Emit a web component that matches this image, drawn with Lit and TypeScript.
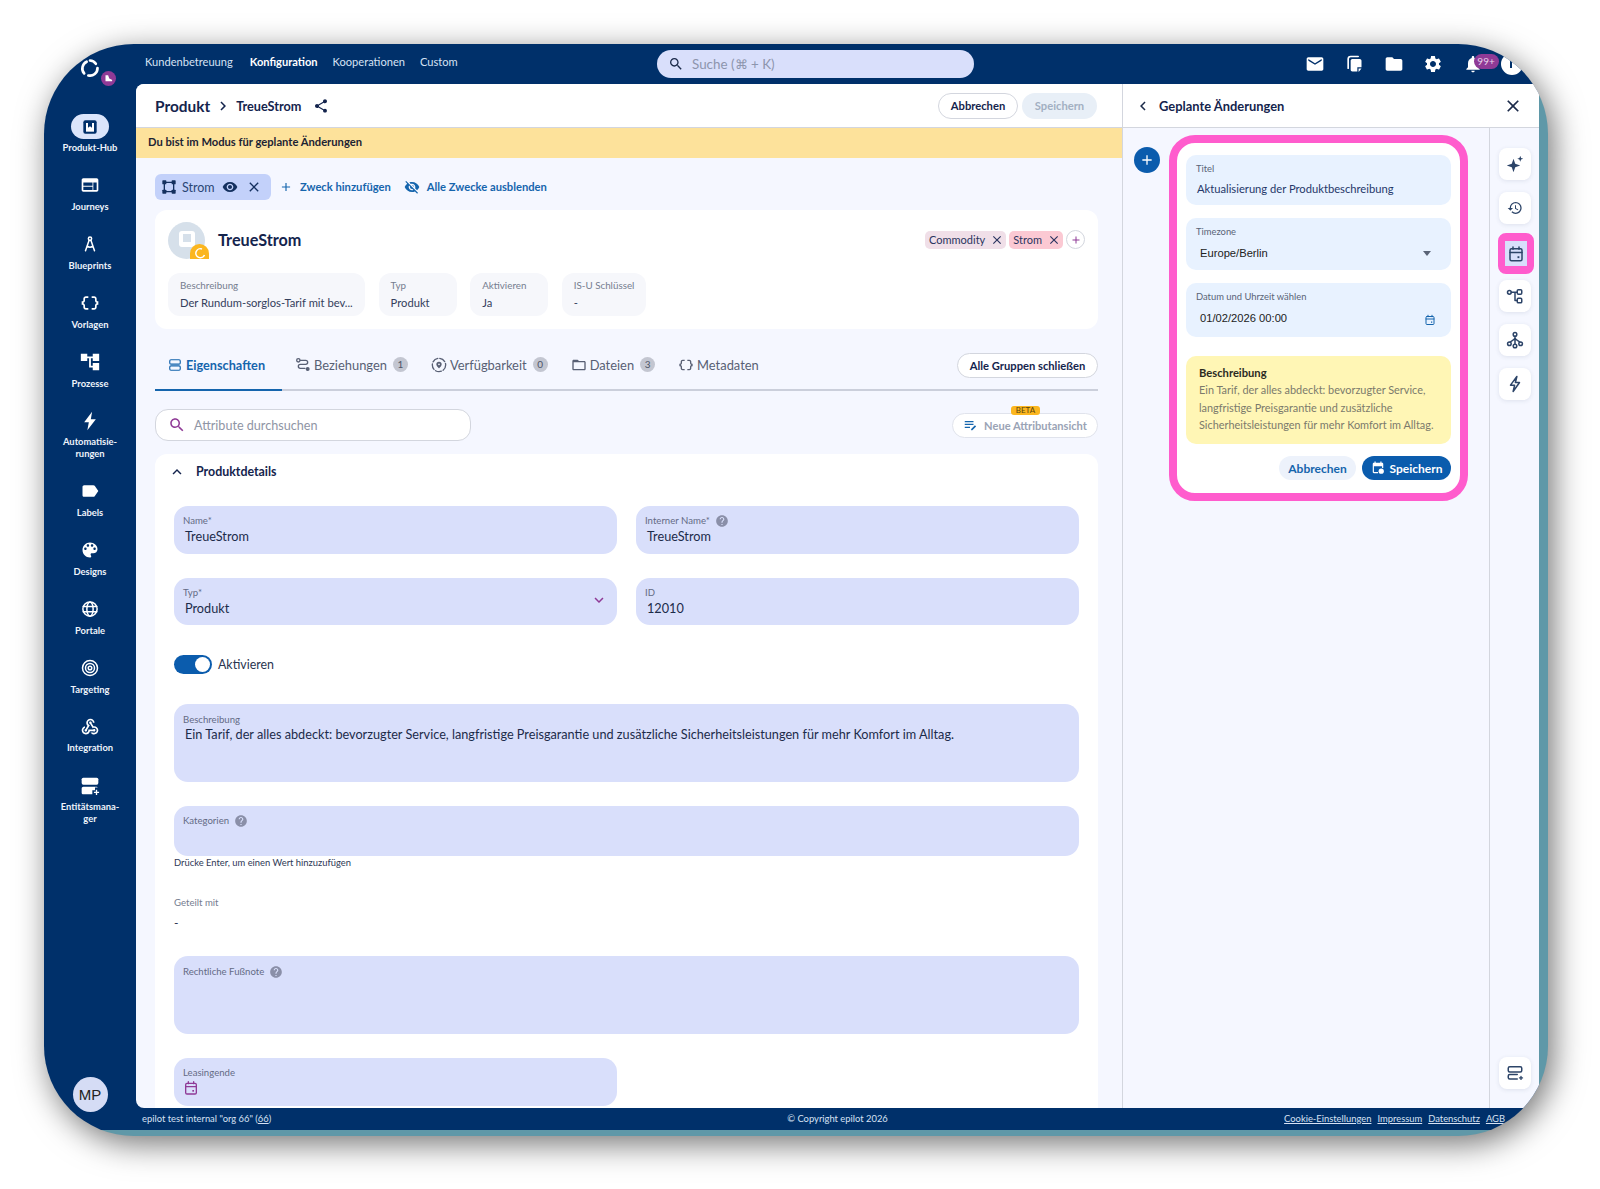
import { LitElement, html, css, svg } from 'lit';
import { customElement } from 'lit/decorators.js';

// material-ish paths, 24x24 viewBox
const P = {
  mail: 'M20 4H4c-1.1 0-1.99.9-1.99 2L2 18c0 1.1.9 2 2 2h16c1.1 0 2-.9 2-2V6c0-1.1-.9-2-2-2zm0 4l-8 5-8-5V6l8 5 8-5v2z',
  folder: 'M10 4H4c-1.1 0-1.99.9-1.99 2L2 18c0 1.1.9 2 2 2h16c1.1 0 2-.9 2-2V8c0-1.1-.9-2-2-2h-8l-2-2z',
  folderOutline: 'M20 6h-8l-2-2H4c-1.1 0-1.99.9-1.99 2L2 18c0 1.1.9 2 2 2h16c1.1 0 2-.9 2-2V8c0-1.1-.9-2-2-2zm0 12H4V8h16v10z',
  gear: 'M19.14 12.94c.04-.3.06-.61.06-.94 0-.32-.02-.64-.07-.94l2.03-1.58a.49.49 0 0 0 .12-.61l-1.92-3.32a.488.488 0 0 0-.59-.22l-2.39.96c-.5-.38-1.03-.7-1.62-.94l-.36-2.54a.484.484 0 0 0-.48-.41h-3.84c-.24 0-.43.17-.47.41l-.36 2.54c-.59.24-1.13.57-1.62.94l-2.39-.96c-.22-.08-.47 0-.59.22L2.74 8.87c-.12.21-.08.47.12.61l2.03 1.58c-.05.3-.09.63-.09.94s.02.64.07.94l-2.03 1.58a.49.49 0 0 0-.12.61l1.92 3.32c.12.22.37.29.59.22l2.39-.96c.5.38 1.03.7 1.62.94l.36 2.54c.05.24.24.41.48.41h3.84c.24 0 .44-.17.47-.41l.36-2.54c.59-.24 1.13-.56 1.62-.94l2.39.96c.22.08.47 0 .59-.22l1.92-3.32c.12-.22.07-.47-.12-.61l-2.01-1.58zM12 15.6c-1.98 0-3.6-1.62-3.6-3.6s1.62-3.6 3.6-3.6 3.6 1.62 3.6 3.6-1.62 3.6-3.6 3.6z',
  bell: 'M12 22c1.1 0 2-.9 2-2h-4c0 1.1.89 2 2 2zm6-6v-5c0-3.07-1.64-5.64-4.5-6.32V4c0-.83-.67-1.5-1.5-1.5s-1.5.67-1.5 1.5v.68C7.63 5.36 6 7.92 6 11v5l-2 2v1h16v-1l-2-2z',
  search: 'M15.5 14h-.79l-.28-.27C15.41 12.59 16 11.11 16 9.5 16 5.91 13.09 3 9.5 3S3 5.91 3 9.5 5.91 16 9.5 16c1.61 0 3.09-.59 4.23-1.57l.27.28v.79l5 4.99L20.49 19l-4.99-5zm-6 0C7.01 14 5 11.99 5 9.5S7.01 5 9.5 5 14 7.01 14 9.5 11.99 14 9.5 14z',
  share: 'M18 16.08c-.76 0-1.44.3-1.96.77L8.91 12.7c.05-.23.09-.46.09-.7s-.04-.47-.09-.7l7.05-4.11c.54.5 1.25.81 2.04.81 1.66 0 3-1.34 3-3s-1.34-3-3-3-3 1.34-3 3c0 .24.04.47.09.7L8.04 9.81C7.5 9.31 6.79 9 6 9c-1.66 0-3 1.34-3 3s1.34 3 3 3c.79 0 1.5-.31 2.04-.81l7.12 4.16c-.05.21-.08.43-.08.65 0 1.61 1.31 2.92 2.92 2.92s2.92-1.31 2.92-2.92-1.31-2.92-2.92-2.92z',
  close: 'M19 6.41 17.59 5 12 10.59 6.41 5 5 6.41 10.59 12 5 17.59 6.41 19 12 13.41 17.59 19 19 17.59 13.41 12z',
  eye: 'M12 4.5C7 4.5 2.73 7.61 1 12c1.73 4.39 6 7.5 11 7.5s9.27-3.11 11-7.5c-1.73-4.39-6-7.5-11-7.5zM12 17c-2.76 0-5-2.24-5-5s2.24-5 5-5 5 2.24 5 5-2.24 5-5 5zm0-8c-1.66 0-3 1.34-3 3s1.34 3 3 3 3-1.34 3-3-1.34-3-3-3z',
  eyeOff: 'M12 7c2.76 0 5 2.24 5 5 0 .65-.13 1.26-.36 1.83l2.92 2.92c1.51-1.26 2.7-2.89 3.43-4.75-1.73-4.39-6-7.5-11-7.5-1.4 0-2.74.25-3.98.7l2.16 2.16C10.74 7.13 11.35 7 12 7zM2 4.27l2.28 2.28.46.46C3.08 8.3 1.78 10.02 1 12c1.73 4.39 6 7.5 11 7.5 1.55 0 3.03-.3 4.38-.84l.42.42L19.73 22 21 20.73 3.27 3 2 4.27zM7.53 9.8l1.55 1.55c-.05.21-.08.43-.08.65 0 1.66 1.34 3 3 3 .22 0 .44-.03.65-.08l1.55 1.55c-.67.33-1.41.53-2.2.53-2.76 0-5-2.24-5-5 0-.79.2-1.53.53-2.2zm4.31-.78l3.15 3.15.02-.16c0-1.66-1.34-3-3-3l-.17.01z',
  palette: 'M12 3c-4.97 0-9 4.03-9 9s4.03 9 9 9c.83 0 1.5-.67 1.5-1.5 0-.39-.15-.74-.39-1.01-.23-.26-.38-.61-.38-.99 0-.83.67-1.5 1.5-1.5H16c2.76 0 5-2.24 5-5 0-4.42-4.03-8-9-8zm-5.5 9c-.83 0-1.5-.67-1.5-1.5S5.67 9 6.5 9 8 9.67 8 10.5 7.33 12 6.5 12zm3-4C8.67 8 8 7.33 8 6.5S8.67 5 9.5 5s1.5.67 1.5 1.5S10.33 8 9.5 8zm5 0c-.83 0-1.5-.67-1.5-1.5S13.67 5 14.5 5s1.5.67 1.5 1.5S15.33 8 14.5 8zm3 4c-.83 0-1.5-.67-1.5-1.5S16.67 9 17.5 9s1.5.67 1.5 1.5-.67 1.5-1.5 1.5z',
  label: 'M17.63 5.84C17.27 5.33 16.67 5 16 5L5 5.01C3.9 5.01 3 5.9 3 7v10c0 1.1.9 1.99 2 1.99L16 19c.67 0 1.27-.33 1.63-.84L22 12l-4.37-6.16z',
  web: 'M20 4H4c-1.1 0-1.99.9-1.99 2L2 18c0 1.1.9 2 2 2h16c1.1 0 2-.9 2-2V6c0-1.1-.9-2-2-2zm-5 14H4v-4h11v4zm0-5H4V9h11v4zm5 5h-4V9h4v9z',
  braces: 'M4 7v2c0 .55-.45 1-1 1H2v4h1c.55 0 1 .45 1 1v2c0 1.65 1.35 3 3 3h3v-2H7c-.55 0-1-.45-1-1v-2c0-1.3-.84-2.42-2-2.83v-.34C5.16 11.42 6 10.3 6 9V7c0-.55.45-1 1-1h3V4H7C5.35 4 4 5.35 4 7zM21 10c-.55 0-1-.45-1-1V7c0-1.65-1.35-3-3-3h-3v2h3c.55 0 1 .45 1 1v2c0 1.3.84 2.42 2 2.83v.34c-1.16.41-2 1.52-2 2.83v2c0 .55-.45 1-1 1h-3v2h3c1.65 0 3-1.35 3-3v-2c0-.55.45-1 1-1h1v-4h-1z',
  tree: 'M22 11V3h-7v3H9V3H2v8h7V8h2v10h4v3h7v-8h-7v3h-2V8h2v3z',
  bolt: 'M14.5 1 5 13.6h5.6L8.8 23 19 9.8h-6z',
  webhook: 'M10 15h5.88c.27-.31.67-.5 1.12-.5.83 0 1.5.67 1.5 1.5s-.67 1.5-1.5 1.5c-.44 0-.84-.19-1.12-.5H11.9c-.46 2.28-2.48 4-4.9 4-2.76 0-5-2.24-5-5 0-2.42 1.72-4.44 4-4.9v2.07c-1.16.41-2 1.53-2 2.83 0 1.65 1.35 3 3 3s3-1.35 3-3v-1zm2.5-11c1.65 0 3 1.35 3 3h2c0-2.76-2.24-5-5-5s-5 2.24-5 5c0 1.43.6 2.71 1.55 3.62l-2.35 3.9C6.02 14.66 5.5 15.27 5.5 16c0 .83.67 1.5 1.5 1.5s1.5-.67 1.5-1.5c0-.16-.02-.31-.07-.45l3.38-5.63C10.49 9.61 9.5 8.42 9.5 7c0-1.65 1.35-3 3-3zm4.5 9c-.64 0-1.23.2-1.72.54l-3.05-5.07C11.53 8.35 11 7.74 11 7c0-.83.67-1.5 1.5-1.5S14 6.17 14 7c0 .15-.02.29-.06.43l2.19 3.65c.28-.05.57-.08.87-.08 2.76 0 5 2.24 5 5s-2.24 5-5 5c-1.85 0-3.47-1.01-4.33-2.5h2.67c.48.32 1.05.5 1.66.5 1.65 0 3-1.35 3-3s-1.35-3-3-3z',
  history: 'M13 3a9 9 0 0 0-9 9H1l3.89 3.89.07.14L9 12H6c0-3.87 3.13-7 7-7s7 3.13 7 7-3.13 7-7 7c-1.93 0-3.68-.79-4.94-2.06l-1.42 1.42A8.954 8.954 0 0 0 13 21a9 9 0 0 0 0-18zm-1 5v5l4.28 2.54.72-1.21-3.5-2.08V8H12z',
  plus: 'M19 13h-6v6h-2v-6H5v-2h6V5h2v6h6v2z',
  sparkle: 'M10 5l2.3 6.7L19 14l-6.7 2.3L10 23l-2.3-6.7L1 14l6.7-2.3zM19 1l1.1 2.9L23 5l-2.9 1.1L19 9l-1.1-2.9L15 5l2.9-1.1z',
  chevDown: 'M7.41 8.59 12 13.17l4.59-4.58L18 10l-6 6-6-6z',
  chevUp: 'M7.41 15.41 12 10.83l4.59 4.58L18 14l-6-6-6 6z',
  chevLeft: 'M15.41 7.41 14 6l-6 6 6 6 1.41-1.41L10.83 12z',
  chevRight: 'M8.59 16.59 13.17 12 8.59 7.41 10 6l6 6-6 6z',
  help: 'M12 2C6.48 2 2 6.48 2 12s4.48 10 10 10 10-4.48 10-10S17.52 2 12 2zm1 17h-2v-2h2v2zm2.07-7.75-.9.92C13.45 12.9 13 13.5 13 15h-2v-.5c0-1.1.45-2.1 1.17-2.83l1.24-1.26c.37-.36.59-.86.59-1.41 0-1.1-.9-2-2-2s-2 .9-2 2H8c0-2.21 1.79-4 4-4s4 1.79 4 4c0 .88-.36 1.68-.93 2.25z',
  editList: 'M3 5h15v2.2H3zM3 10h15v2.2H3zM3 15h9v2.2H3zM20.5 12.5l2 2-6.5 6.5H14v-2z',
};

const icon = (d: string, cls = '') => html`<svg class="ic ${cls}" viewBox="0 0 24 24" fill="currentColor"><path d=${d}></path></svg>`;
const drawn = (content: unknown, cls = '') => html`<svg class="ic ${cls}" viewBox="0 0 24 24" fill="none" stroke="currentColor" stroke-width="2" stroke-linecap="round" stroke-linejoin="round">${content}</svg>`;

const calendar = (cls: string) => drawn(svg`<rect x="4" y="5" width="16" height="16" rx="2"></rect><path d="M4 10h16M8 2.5v3M16 2.5v3"></path><rect x="14" y="15" width="2.5" height="2.5" fill="currentColor" stroke="none"></rect>`, cls);
const hubIcon = html`<svg class="ic i16" viewBox="0 0 24 24"><rect x="2" y="2" width="20" height="20" rx="3" fill="#00306a"></rect><rect x="6" y="6" width="12" height="13" fill="#fff"></rect><path d="M9 6h6v7l-3-2-3 2z" fill="#00306a"></path></svg>`;
const compass = drawn(svg`<circle cx="12" cy="5" r="2.2"></circle><path d="M10.8 7 6 21M13.2 7 18 21M8 15c2.5 1.6 5.5 1.6 8 0"></path>`, 'i18');
const globe = drawn(svg`<circle cx="12" cy="12" r="9.5"></circle><ellipse cx="12" cy="12" rx="4.2" ry="9.5"></ellipse><path d="M3 8.5h18M3 15.5h18"></path>`, 'i18');
const target = drawn(svg`<circle cx="12" cy="12" r="10"></circle><circle cx="12" cy="12" r="6"></circle><circle cx="12" cy="12" r="2.4"></circle>`, 'i18');
const entity = html`<svg class="ic i20" viewBox="0 0 24 24" fill="currentColor"><rect x="2" y="2" width="20" height="8.5" rx="2"></rect><path d="M4 13h16c.6 0 1 .3 1.3.8H18v3.2h-3.2V22H4c-1.1 0-2-.9-2-2v-5c0-1.1.9-2 2-2z"></path><path d="M19 16.5h1.6v2.3h2.3v1.6h-2.3v2.3H19v-2.3h-2.3v-1.6H19z"></path></svg>`;
const copies = html`<svg class="ic i20" viewBox="0 0 24 24"><path d="M5 17V6c0-1.6 1.3-3 3-3h9" fill="none" stroke="currentColor" stroke-width="2" stroke-linecap="round"></path><path d="M10 6h9c1.1 0 2 .9 2 2v8h-5v5h-6c-1.1 0-2-.9-2-2V8c0-1.1.9-2 2-2z" fill="currentColor"></path><path d="M17.5 17.5H21L17.5 21.5z" fill="currentColor"></path></svg>`;
const frameIcon = html`<svg class="ic i16" viewBox="0 0 24 24" fill="currentColor"><path d="M5 5h14v14H5z" fill="none" stroke="currentColor" stroke-width="2"></path><rect x="2" y="2" width="6" height="6" rx="1"></rect><rect x="16" y="2" width="6" height="6" rx="1"></rect><rect x="2" y="16" width="6" height="6" rx="1"></rect><rect x="16" y="16" width="6" height="6" rx="1"></rect></svg>`;
const stackIcon = drawn(svg`<rect x="3" y="3" width="18" height="7.5" rx="2"></rect><rect x="3" y="13.5" width="18" height="7.5" rx="2"></rect>`, 'i14');
const routeIcon = drawn(svg`<circle cx="5" cy="5" r="2.5"></circle><path d="M8 5h8c2 0 3 1.5 3 3s-1 3-3 3H8c-2 0-3 1.5-3 3s1 3 3 3h7"></path><circle cx="19" cy="18" r="2" fill="currentColor"></circle>`, 'i16');
const availIcon = drawn(svg`<circle cx="12" cy="12" r="10" stroke-dasharray="9 3"></circle><path d="M12 7a4 4 0 0 1 4 4c0 3-4 6-4 6s-4-3-4-6a4 4 0 0 1 4-4z" fill="currentColor" stroke="none"></path><circle cx="12" cy="11" r="1.3" fill="#f5f7ff" stroke="none"></circle>`, 'i16');
const flowIcon = drawn(svg`<circle cx="4.5" cy="7" r="2.5"></circle><rect x="15" y="3.5" width="6" height="6" rx="1.5"></rect><rect x="15" y="15" width="6" height="6" rx="1.5"></rect><path d="M7 7h8M12 7v11h3"></path>`, 'i18');
const hubTree = drawn(svg`<circle cx="12" cy="4.5" r="2.4"></circle><circle cx="4.5" cy="17" r="2.4"></circle><circle cx="12" cy="20" r="2.4"></circle><circle cx="19.5" cy="17" r="2.4"></circle><path d="M12 7v10.5M12 9c0 3-5 4-6.3 6M12 9c0 3 5 4 6.3 6"></path>`, 'i18');
const boltOutline = drawn(svg`<path d="M14.5 2 6 13.5h5.5L9.5 22 18 10h-5.5z"></path>`, 'i18');
const addStack = drawn(svg`<rect x="3" y="3.5" width="18" height="7" rx="2"></rect><path d="M15 14H5c-1.2 0-2 .9-2 2v2c0 1.1.8 2 2 2h10"></path><path d="M20 16.5v4M18 18.5h4" stroke-width="1.8"></path>`, 'i18');
const saveCal = html`<svg class="ic i14" viewBox="0 0 24 24"><path d="M16 1v2H8V1H6v2H5c-1.1 0-2 .9-2 2v14c0 1.1.9 2 2 2h7v-2H5V9h14v3h2V5c0-1.1-.9-2-2-2h-1V1z" fill="currentColor"></path><circle cx="17.5" cy="17.5" r="4.5" fill="currentColor"></circle></svg>`;

const NAV = [
  { label: html`Journeys`, icon: icon(P.web, 'i20') },
  { label: html`Blueprints`, icon: compass },
  { label: html`Vorlagen`, icon: icon(P.braces, 'i20') },
  { label: html`Prozesse`, icon: icon(P.tree, 'i22') },
  { label: html`Automatisie-<br />rungen`, icon: icon(P.bolt, 'i20') },
  { label: html`Labels`, icon: icon(P.label, 'i20') },
  { label: html`Designs`, icon: icon(P.palette, 'i20') },
  { label: html`Portale`, icon: globe },
  { label: html`Targeting`, icon: target },
  { label: html`Integration`, icon: icon(P.webhook, 'i20') },
  { label: html`Entitätsmana-<br />ger`, icon: entity },
];

const TABS = [
  { name: 'Beziehungen', icon: routeIcon, count: '1' },
  { name: 'Verfügbarkeit', icon: availIcon, count: '0' },
  { name: 'Dateien', icon: icon(P.folderOutline, 'i16'), count: '3' },
  { name: 'Metadaten', icon: icon(P.braces, 'i16') },
];

const INFO = [
  { label: 'Beschreibung', value: 'Der Rundum-sorglos-Tarif mit bev...', cls: 'wide' },
  { label: 'Typ', value: 'Produkt', cls: '' },
  { label: 'Aktivieren', value: 'Ja', cls: '' },
  { label: 'IS-U Schlüssel', value: '-', cls: 'key' },
];

@customElement('app-root')
export class AppRoot extends LitElement {
  static styles = css`
    :host {
      display: block;
      box-sizing: border-box;
      width: 1600px;
      height: 1189px;
      padding: 44px 0 0 44px;
      background: #fff;
      overflow: hidden;
      font-family: Lato, 'Liberation Sans', sans-serif;
      color: #1c2b4a;
    }
    * { box-sizing: border-box; }
    .ic { display: block; flex: none; }
    .i12 { width: 12px; height: 12px; }
    .i14 { width: 14px; height: 14px; }
    .i16 { width: 16px; height: 16px; }
    .i18 { width: 18px; height: 18px; }
    .i20 { width: 20px; height: 20px; }
    .i22 { width: 22px; height: 22px; }

    .window {
      width: 1504px;
      height: 1092px;
      border-radius: 90px;
      overflow: hidden;
      display: grid;
      grid-template-columns: 92px 1fr;
      grid-template-rows: 40px 1fr 22px 6px;
      background:
        linear-gradient(#5f98a8, #5f98a8) bottom / 100% 6px no-repeat,
        linear-gradient(#5f98a8, #5f98a8) right bottom / 9px calc(100% - 50px) no-repeat,
        #00306a;
      box-shadow: 5px 8px 32px rgba(0, 0, 0, 0.55);
    }

    /* top bar */
    .topbar {
      grid-column: 1 / -1;
      display: flex;
      align-items: center;
      color: #fff;
    }
    .logo { position: relative; width: 92px; flex: none; align-self: stretch; }
    .logo .ring { position: absolute; left: 36px; top: 14px; width: 20px; height: 20px; }
    .logo .dot {
      position: absolute;
      left: 57px;
      top: 27px;
      width: 15px;
      height: 15px;
      border-radius: 50%;
      background: #8f3a96;
      display: flex;
      align-items: center;
      justify-content: center;
    }
    .topnav { display: flex; width: 521px; padding-left: 9px; font-size: 11.1px; color: #d7e2f4; margin-top: -6px; }
    .topnav span { margin-right: 17px; }
    .topnav span:nth-child(3) { margin-right: 15px; }
    .topnav .on { color: #fff; font-weight: 700; margin-right: 15px; }
    .search {
      width: 317px;
      height: 28px;
      margin-top: -1px;
      border-radius: 14px;
      background: #d9dffb;
      color: #1c2b4a;
      display: flex;
      align-items: center;
      padding-left: 11px;
      gap: 8px;
      font-size: 13.4px;
    }
    .search span { color: #8d95ad; }
    .tops { display: flex; align-items: center; gap: 19.4px; margin-left: 331px; position: relative; }
    .bell { position: relative; }
    .bell b {
      position: absolute;
      left: 11px;
      top: 0;
      width: 25px;
      height: 15px;
      border-radius: 8px;
      background: #8f3a96;
      color: #e8d4ea;
      font-size: 10px;
      font-weight: 400;
      text-align: center;
      line-height: 15px;
    }
    .me { position: relative; width: 22px; height: 22px; margin-left: -1px; border-radius: 50%; background: #fff; flex: none; }
    .me::after { content: ''; position: absolute; left: 9px; top: 6px; width: 2px; height: 9px; background: #00306a; }

    /* sidebar */
    .side {
      grid-row: 2 / 4;
      display: flex;
      flex-direction: column;
      align-items: center;
      padding: 30px 0 18px;
      color: #fff;
    }
    .nav { display: flex; flex-direction: column; align-items: center; margin-bottom: 19.4px; font-size: 9.4px; font-weight: 700; line-height: 11.5px; text-align: center; color: #eef3fb; }
    .nav .slot { width: 38px; height: 25px; margin-bottom: 3px; border-radius: 13px; display: flex; align-items: center; justify-content: center; color: #fff; }
    .nav.on .slot { background: #dbe5fb; }
    .avatar {
      margin-top: auto;
      width: 35px;
      height: 35px;
      border-radius: 50%;
      background: #d5dcf5;
      color: #222;
      font: 15px 'Liberation Sans', sans-serif;
      display: flex;
      align-items: center;
      justify-content: center;
    }

    /* main area */
    .main {
      margin-right: 9px;
      display: flex;
      min-height: 0;
      background: #f5f7ff;
      border-radius: 8px 0 0 8px;
      overflow: hidden;
    }
    .left { width: 986px; flex: none; display: flex; flex-direction: column; min-height: 0; }
    .head {
      height: 44px;
      flex: none;
      background: #fff;
      border-bottom: 1px solid #d3d6de;
      display: flex;
      align-items: center;
    }
    .left .head { padding: 0 25px 0 19px; }
    .crumb-main { font-size: 15.4px; font-weight: 700; color: #14244d; }
    .crumb-sep { margin: 0 4px 0 4px; color: #14244d; }
    .crumb { font-size: 12.7px; font-weight: 700; color: #14244d; }
    .head .share { margin-left: 12px; color: #14244d; }
    .spacer { flex: 1; }
    .btn {
      height: 26px;
      border-radius: 13px;
      font-size: 11.2px;
      font-weight: 700;
      display: flex;
      align-items: center;
      justify-content: center;
      gap: 5px;
    }
    .btn.outline { background: #fff; border: 1px solid #d3d6de; color: #14244d; }
    .btn.cancel { width: 80px; }
    .btn.mute { width: 75px; margin-left: 4px; background: #e8eff7; color: #a2afc2; }
    .banner {
      height: 30px;
      flex: none;
      background: #fde29b;
      padding: 0 0 3px 12px;
      display: flex;
      align-items: center;
      font-size: 11.2px;
      font-weight: 700;
      color: #1c2333;
    }
    .body { flex: 1; min-height: 0; padding: 16px 24px 0 19px; display: flex; flex-direction: column; }

    .purpose { height: 26px; flex: none; display: flex; align-items: center; font-size: 11.2px; font-weight: 700; color: #1565ad; }
    .purpose .lnk { margin-top: -2px; }
    .chip {
      width: 116px;
      height: 26px;
      border-radius: 6px;
      background: #c3d1fa;
      color: #14305f;
      display: flex;
      align-items: center;
      padding-left: 6px;
      font-size: 12.5px;
      font-weight: 400;
    }
    .chip .nm { margin: 0 7px 0 5px; color: #2a4675; }
    .chip .x { margin-left: 8px; }
    .purpose .add { margin: 0 7px 0 8px; }
    .purpose .off { margin: 0 7px 0 13px; }

    .card { height: 119px; flex: none; margin-top: 10px; background: #fff; border-radius: 12px; padding: 12px 13px; position: relative; }
    .card-top { display: flex; align-items: flex-start; }
    .logo-round { width: 37px; height: 37px; border-radius: 50%; background: #d6e0ea; position: relative; display: flex; align-items: center; justify-content: center; }
    .logo-round i { display: block; width: 16px; height: 16px; margin-top: -4px; border-radius: 3px; background: #fff; position: relative; }
    .logo-round i::after { content: ''; position: absolute; left: 4px; top: 3px; width: 8px; height: 8px; background: #d6e0ea; }
    .logo-round u {
      position: absolute;
      left: 22px;
      top: 22px;
      width: 19px;
      height: 15px;
      border-radius: 10px 10px 0 0;
      background: #fbb61f;
      display: flex;
      justify-content: center;
      padding-top: 3px;
    }
    .card h1 { margin: 8px 0 0 13px; font-size: 16.2px; font-weight: 700; color: #14244d; }
    .tags { margin-left: auto; margin-top: 8px; display: flex; align-items: center; font-size: 11px; color: #2b3560; }
    .tag { height: 18px; border-radius: 5px; display: flex; align-items: center; padding: 0 2px 0 4px; margin-right: 3px; gap: 5px; }
    .tag.c { background: #f0dfe8; }
    .tag.s { background: #fbc9d3; }
    .tag-add { width: 19px; height: 19px; border-radius: 50%; border: 1px solid #d3d6de; color: #8f3a96; display: flex; align-items: center; justify-content: center; }
    .infos { display: flex; gap: 13.6px; margin-top: 14px; }
    .info { width: 78px; height: 43px; padding: 5px 12px 0; border-radius: 12px; background: #f6f7fb; flex: none; }
    .info.wide { width: 197px; }
    .info.key { width: 84px; }
    .info small { display: block; font-size: 9.8px; line-height: 14px; color: #757d8f; white-space: nowrap; }
    .info div { font-size: 11.2px; line-height: 16px; margin-top: 3px; color: #34405c; white-space: nowrap; }

    .tabs { height: 62px; flex: none; display: flex; align-items: flex-end; border-bottom: 2px solid #cbcfdb; font-size: 12.9px; color: #585f74; }
    .tab { height: 36px; padding: 0 10px 13px 13px; display: flex; align-items: center; gap: 3px; }
    .tab.on { width: 127px; margin-bottom: -2px; height: 38px; gap: 4px; border-bottom: 2px solid #1565ad; color: #1565ad; font-weight: 700; font-size: 12.7px; }
    .tab em { width: 15px; height: 15px; margin-left: 3px; border-radius: 50%; background: #c3c6d1; font-style: normal; font-size: 10px; text-align: center; line-height: 15px; color: #4e5567; }
    .tabs .btn { margin: 0 0 11px auto; width: 141px; height: 25px; }

    .tools { height: 32px; flex: none; margin-top: 18px; display: flex; align-items: center; justify-content: space-between; }
    .find {
      width: 316px;
      height: 32px;
      border-radius: 13px;
      border: 1px solid #d3d6de;
      background: #fff;
      display: flex;
      align-items: center;
      padding-left: 12px;
      gap: 8px;
      font-size: 12.6px;
      color: #8f95a5;
    }
    .find svg { color: #8f3a96; }
    .view {
      position: relative;
      width: 146px;
      height: 25px;
      border-radius: 13px;
      border: 1px solid #e0e3ec;
      background: #fff;
      display: flex;
      align-items: center;
      justify-content: center;
      gap: 7px;
      font-size: 11.1px;
      font-weight: 700;
      color: #9aa3b5;
    }
    .view svg { color: #1565ad; }
    .view b {
      position: absolute;
      left: 58px;
      top: -8px;
      width: 29px;
      height: 9px;
      border-radius: 3px;
      background: #fbb61f;
      color: #5a430b;
      font-size: 8px;
      font-weight: 400;
      line-height: 9px;
      text-align: center;
    }

    .section { flex: 1; min-height: 0; margin-top: 13px; padding: 0 19px; background: #fff; border-radius: 12px 12px 0 0; overflow: hidden; }
    .section-head { height: 52px; padding-top: 9px; display: flex; align-items: flex-start; gap: 10px; font-size: 12.4px; line-height: 18px; font-weight: 700; color: #14244d; margin-left: -6px; }
    .grid { display: grid; grid-template-columns: 1fr 1fr; gap: 24px 19px; }
    .full { grid-column: 1 / -1; }
    .field { position: relative; height: 48px; padding: 8px 9px 0; border-radius: 14px; background: #d9dffb; }
    .field.h47 { height: 47px; }
    .field.h50 { height: 50px; }
    .field.tall { height: 78px; padding-top: 9px; }
    .field.tall p { margin-top: 0; }
    .field label { display: flex; align-items: center; gap: 5px; font-size: 9.6px; line-height: 14px; color: #646b85; }
    .field label svg { color: #8a8fa8; }
    .field p { margin: 1px 0 0 2px; font-size: 12.7px; line-height: 15px; color: #1c2b4a; }
    .field .pick { position: absolute; right: 9px; top: 13px; color: #8f3a96; }
    .field .cal { color: #8f3a96; }
    .toggle-row { margin: 6px 0; display: flex; align-items: center; gap: 6px; font-size: 12.4px; color: #2a3550; }
    .toggle { width: 38px; height: 19px; border-radius: 10px; background: #0b5cad; display: flex; justify-content: flex-end; padding: 2px; }
    .toggle i { display: block; width: 15px; height: 15px; border-radius: 50%; background: #fff; }
    .hint { font-size: 9.4px; line-height: 14px; color: #2e3855; }
    .shared { padding: 2px 0 1px; font-size: 9.6px; line-height: 14px; color: #757d8f; }
    .shared div { margin-top: 4px; line-height: 17px; font-size: 12px; color: #1c2b4a; }

    /* right side panel */
    .right { flex: 1; display: flex; flex-direction: column; min-width: 0; border-left: 1px solid #d3d6de; }
    .right .head { padding: 0 16px 0 11px; }
    .right .head strong { margin-left: 7px; font-size: 12.9px; font-weight: 700; color: #14244d; }
    .panel { flex: 1; display: flex; min-height: 0; }
    .fab { width: 26px; height: 26px; margin: 19px 9px 0 11px; border-radius: 50%; background: #0b5cad; color: #fff; display: flex; align-items: center; justify-content: center; flex: none; }
    .form {
      width: 299px;
      height: 366px;
      margin-top: 7px;
      flex: none;
      border: 8px solid #ff5ccd;
      border-radius: 26px;
      background: #fff;
      padding: 12px 9px;
      display: flex;
      flex-direction: column;
    }
    .ff { height: 50px; flex: none; border-radius: 10px; background: #e8f2ff; padding: 7px 10px 0; position: relative; margin-bottom: 13px; }
    .ff.h52 { height: 52px; }
    .ff.h54 { height: 54px; }
    .ff label { display: block; font-size: 9.4px; line-height: 14px; color: #5a6477; }
    .ff p { margin: 5px 0 0 1px; font-size: 11.2px; line-height: 15px; color: #26386a; }
    .ff p.sys { margin: 6px 0 0 4px; font: 11.2px/16px 'Liberation Sans', sans-serif; color: #222; }
    .ff .tri { position: absolute; right: 20px; top: 33px; width: 0; height: 0; border: 4px solid transparent; border-top: 5px solid #5a6477; border-bottom: 0; }
    .ff .when { position: absolute; right: 15px; top: 31px; color: #1565ad; }
    .note { height: 88px; flex: none; margin-top: 6px; border-radius: 10px; background: #fff6b5; padding: 9px 13px; font-size: 10.9px; line-height: 17.5px; color: #7b7a6c; white-space: nowrap; }
    .note b { display: block; color: #2b2a1f; font-size: 11.2px; line-height: 15px; margin-bottom: 1px; }
    .actions { margin-top: 12px; display: flex; justify-content: flex-end; gap: 6px; }
    .btn.soft { width: 77px; height: 24px; font-size: 12px; background: #edf2fb; color: #1565ad; }
    .btn.solid { width: 89px; height: 24px; font-size: 12px; background: #0b5cad; color: #fff; }
    .rail {
      width: 50px;
      margin-left: 21px;
      flex: none;
      border-left: 1px solid #d3d6de;
      display: flex;
      flex-direction: column;
      align-items: center;
      padding: 20px 0 19px;
      gap: 12px;
      color: #2c4468;
    }
    .tool { width: 32px; height: 32px; flex: none; border-radius: 8px; background: #fff; box-shadow: 0 1px 4px rgba(60, 70, 110, 0.12); display: flex; align-items: center; justify-content: center; }
    .tool.on {
      width: 36px;
      height: 41px;
      margin: -3px 0 -6px 2px;
      border: solid #ff5ccd;
      border-width: 8px 7px;
      background: #d8dffb;
      box-shadow: none;
    }
    .tool.end { margin-top: auto; }

    .foot {
      grid-column: 2;
      margin-right: 9px;
      display: grid;
      grid-template-columns: 1fr auto 1fr;
      align-items: center;
      padding: 0 6px 2px;
      font-size: 9.4px;
      color: #d7e2f4;
    }
    .links { text-align: right; padding-right: 28px; }
    .links u { margin-left: 6px; }
  `;

  private field(label: string, value: unknown, cls = '', help = false, extra: unknown = '') {
    return html`<div class="field ${cls}">
      <label>${label}${help ? icon(P.help, 'i14') : ''}</label>
      ${value ? html`<p>${value}</p>` : ''}${extra}
    </div>`;
  }

  private topbar() {
    return html`<header class="topbar">
      <div class="logo">
        <svg class="ring" viewBox="0 0 24 24" fill="none" stroke="#fff" stroke-width="3.2" stroke-linecap="round"><path d="M8 4.5a9 9 0 0 0-3 14"></path><path d="M10 21a9 9 0 0 0 11-9"></path><path d="M12 3a9 9 0 0 1 7 4"></path></svg>
        <div class="dot"><svg class="ic" width="9" height="9" viewBox="0 0 24 24" fill="#fff"><path d="M4 3h7l3 9 7 3c1 .5 1 3 0 4H4z"></path></svg></div>
      </div>
      <nav class="topnav">
        <span>Kundenbetreuung</span><span class="on">Konfiguration</span><span>Kooperationen</span><span>Custom</span>
      </nav>
      <div class="search">${icon(P.search, 'i16')}<span>Suche (⌘ + K)</span></div>
      <div class="tops">
        ${icon(P.mail, 'i20')}${copies}${icon(P.folder, 'i20')}${icon(P.gear, 'i20')}
        <div class="bell">${icon(P.bell, 'i20')}<b>99+</b></div>
        <div class="me"></div>
      </div>
    </header>`;
  }

  private sidebar() {
    return html`<aside class="side">
      <div class="nav on"><div class="slot">${hubIcon}</div>Produkt-Hub</div>
      ${NAV.map((n) => html`<div class="nav"><div class="slot">${n.icon}</div><div>${n.label}</div></div>`)}
      <div class="avatar">MP</div>
    </aside>`;
  }

  private leftPanel() {
    return html`<section class="left">
      <div class="head">
        <span class="crumb-main">Produkt</span>
        <span class="crumb-sep">${icon(P.chevRight, 'i18')}</span>
        <span class="crumb">TreueStrom</span>
        <span class="share">${icon(P.share, 'i16')}</span>
        <span class="spacer"></span>
        <div class="btn outline cancel">Abbrechen</div>
        <div class="btn mute">Speichern</div>
      </div>
      <div class="banner">Du bist im Modus für geplante Änderungen</div>
      <div class="body">
        <div class="purpose">
          <div class="chip">
            ${frameIcon}<span class="nm">Strom</span>${icon(P.eye, 'i16')}<span class="x">${icon(P.close, 'i16')}</span>
          </div>
          <span class="add">${icon(P.plus, 'i14')}</span><span class="lnk">Zweck hinzufügen</span>
          <span class="off">${icon(P.eyeOff, 'i16')}</span><span class="lnk">Alle Zwecke ausblenden</span>
        </div>
        <div class="card">
          <div class="card-top">
            <div class="logo-round"><i></i><u><svg class="ic i12" viewBox="0 0 24 24" fill="none" stroke="#fff" stroke-width="3"><path d="M16 4a9 9 0 1 0 5 12"></path></svg></u></div>
            <h1>TreueStrom</h1>
            <div class="tags">
              <div class="tag c">Commodity${icon(P.close, 'i14')}</div>
              <div class="tag s">Strom${icon(P.close, 'i14')}</div>
              <div class="tag-add">${icon(P.plus, 'i12')}</div>
            </div>
          </div>
          <div class="infos">
            ${INFO.map((i) => html`<div class="info ${i.cls}"><small>${i.label}</small><div>${i.value}</div></div>`)}
          </div>
        </div>
        <div class="tabs">
          <div class="tab on">${stackIcon}Eigenschaften</div>
          ${TABS.map((t) => html`<div class="tab">${t.icon}${t.name}${t.count ? html`<em>${t.count}</em>` : ''}</div>`)}
          <div class="btn outline">Alle Gruppen schließen</div>
        </div>
        <div class="tools">
          <div class="find">${icon(P.search, 'i18')}Attribute durchsuchen</div>
          <div class="view"><b>BETA</b>${icon(P.editList, 'i14')}Neue Attributansicht</div>
        </div>
        <div class="section">
          <div class="section-head">${icon(P.chevUp, 'i18')}Produktdetails</div>
          <div class="grid">
            ${this.field('Name*', 'TreueStrom')}
            ${this.field('Interner Name*', 'TreueStrom', '', true)}
            ${this.field('Typ*', 'Produkt', 'h47', false, html`<span class="pick">${icon(P.chevDown, 'i18')}</span>`)}
            ${this.field('ID', '12010', 'h47')}
            <div class="toggle-row full"><div class="toggle"><i></i></div>Aktivieren</div>
            ${this.field('Beschreibung', 'Ein Tarif, der alles abdeckt: bevorzugter Service, langfristige Preisgarantie und zusätzliche Sicherheitsleistungen für mehr Komfort im Alltag.', 'tall full')}
            <div class="full">
              ${this.field('Kategorien', '', 'h50', true)}
              <div class="hint">Drücke Enter, um einen Wert hinzuzufügen</div>
            </div>
            <div class="shared full">Geteilt mit<div>-</div></div>
            ${this.field('Rechtliche Fußnote', '', 'tall full', true)}
            ${this.field('Leasingende', '', '', false, html`<div class="cal">${calendar('i16')}</div>`)}
          </div>
        </div>
      </div>
    </section>`;
  }

  private rightPanel() {
    return html`<section class="right">
      <div class="head">
        ${icon(P.chevLeft, 'i18')}<strong>Geplante Änderungen</strong>
        <span class="spacer"></span>
        ${icon(P.close, 'i20')}
      </div>
      <div class="panel">
        <div class="fab">${icon(P.plus, 'i16')}</div>
        <div class="form">
          <div class="ff"><label>Titel</label><p>Aktualisierung der Produktbeschreibung</p></div>
          <div class="ff h52"><label>Timezone</label><p class="sys">Europe/Berlin</p><span class="tri"></span></div>
          <div class="ff h54"><label>Datum und Uhrzeit wählen</label><p class="sys">01/02/2026 00:00</p><span class="when">${calendar('i12')}</span></div>
          <div class="note">
            <b>Beschreibung</b>
            Ein Tarif, der alles abdeckt: bevorzugter Service,<br />
            langfristige Preisgarantie und zusätzliche<br />
            Sicherheitsleistungen für mehr Komfort im Alltag.
          </div>
          <div class="actions">
            <div class="btn soft">Abbrechen</div>
            <div class="btn solid">${saveCal}Speichern</div>
          </div>
        </div>
        <div class="rail">
          <div class="tool">${icon(P.sparkle, 'i18')}</div>
          <div class="tool">${icon(P.history, 'i16')}</div>
          <div class="tool on">${calendar('i18')}</div>
          <div class="tool">${flowIcon}</div>
          <div class="tool">${hubTree}</div>
          <div class="tool">${boltOutline}</div>
          <div class="tool end">${addStack}</div>
        </div>
      </div>
    </section>`;
  }

  render() {
    return html`<div class="window">
      ${this.topbar()}
      ${this.sidebar()}
      <main class="main">${this.leftPanel()}${this.rightPanel()}</main>
      <footer class="foot">
        <span>epilot test internal "org 66" (<u>66</u>)</span>
        <span>© Copyright epilot 2026</span>
        <span class="links"><u>Cookie-Einstellungen</u><u>Impressum</u><u>Datenschutz</u><u>AGB</u></span>
      </footer>
    </div>`;
  }
}
